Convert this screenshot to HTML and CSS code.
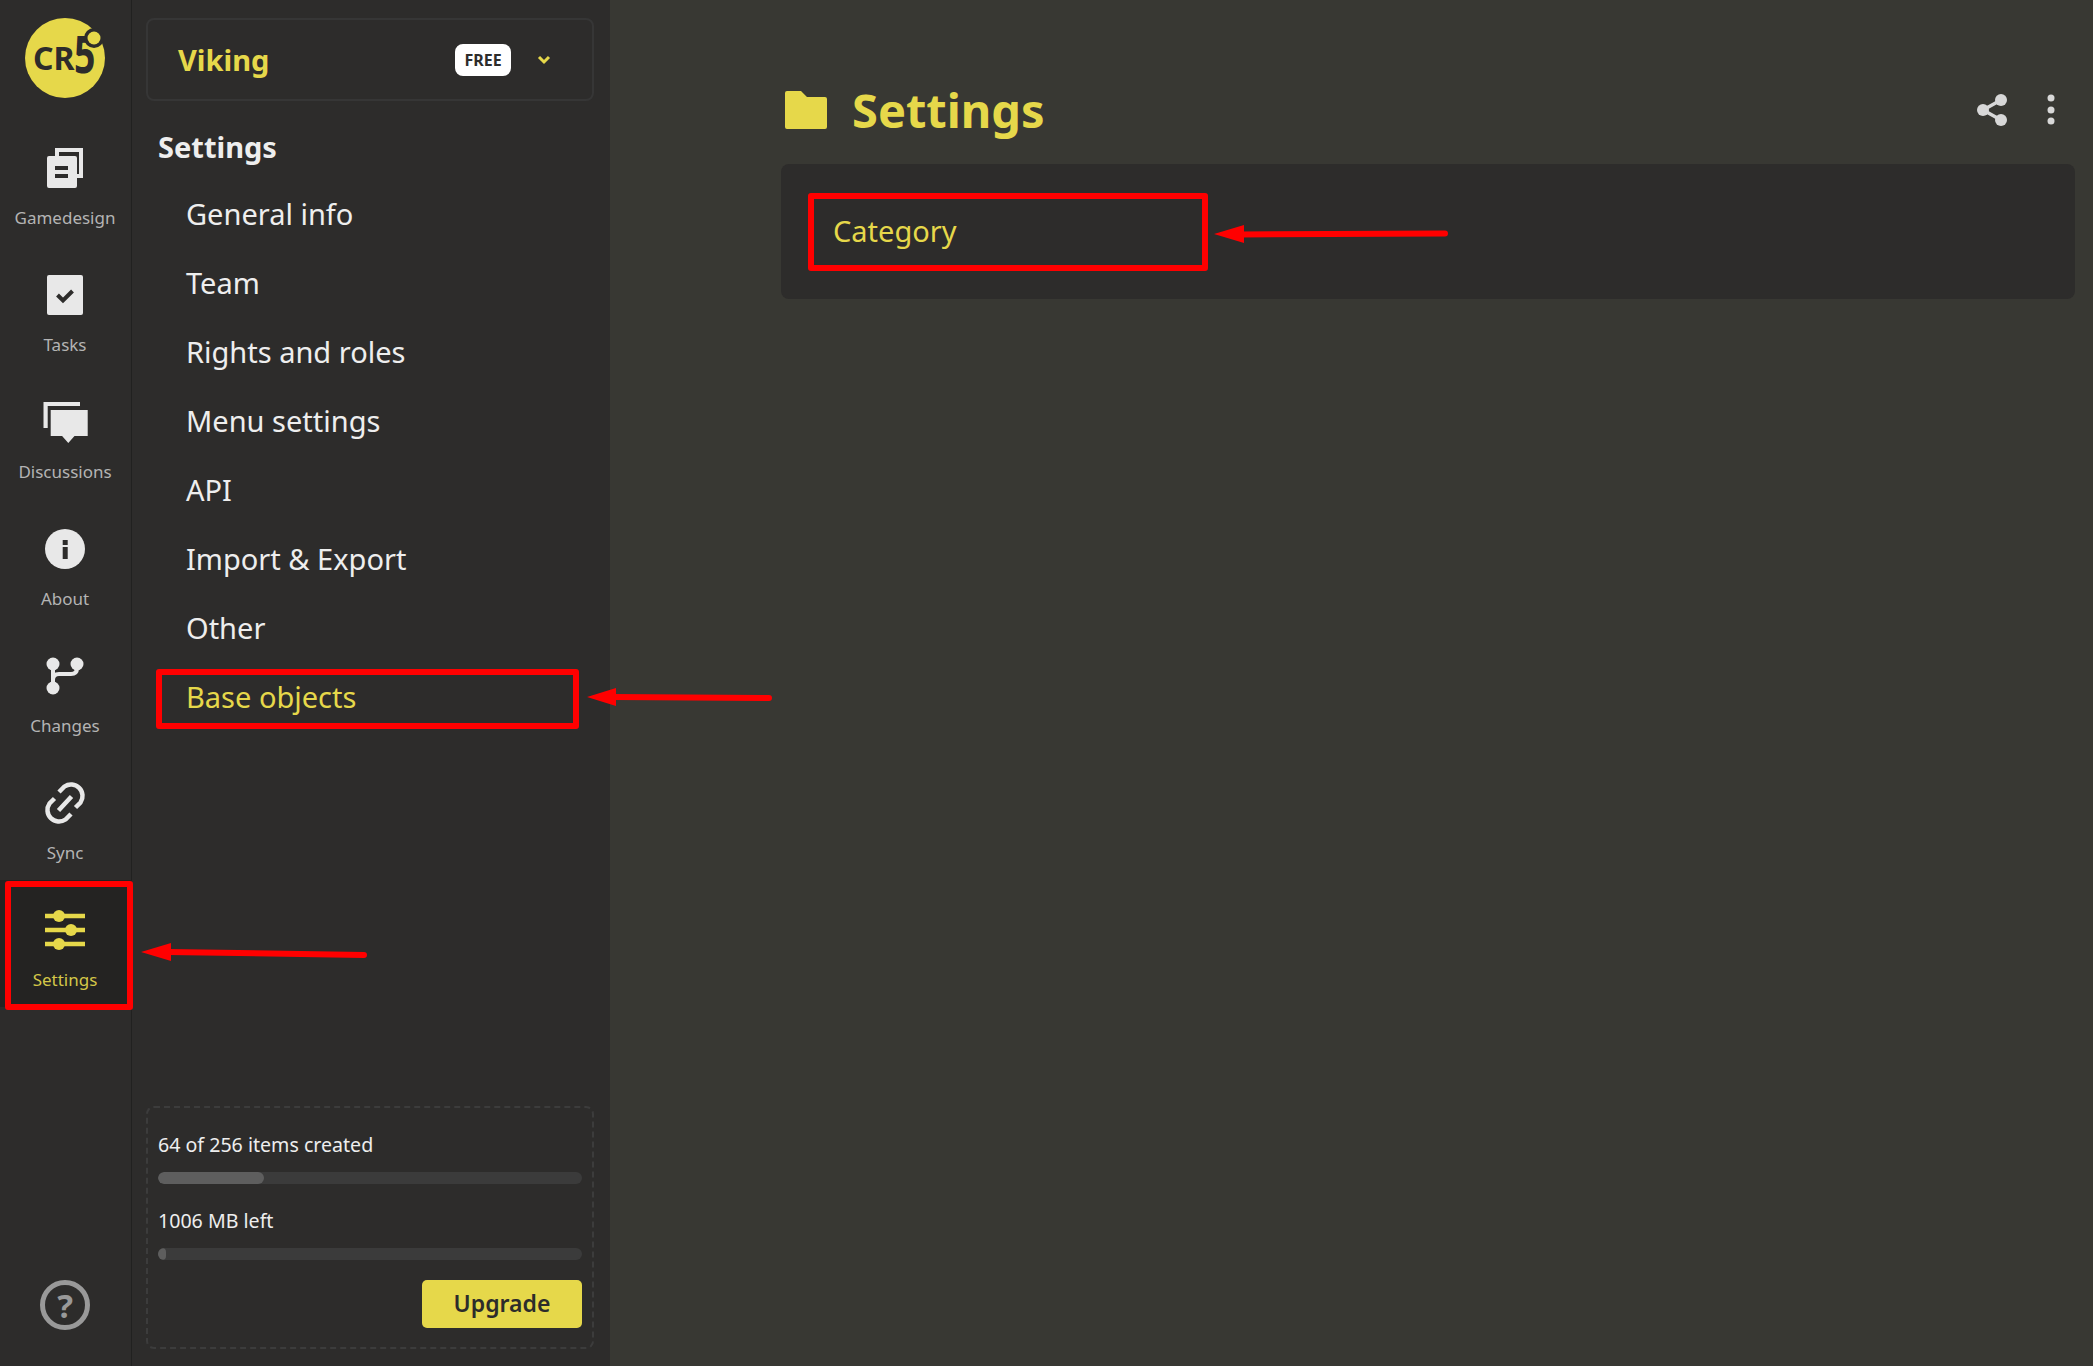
FILE: index.html
```html
<!DOCTYPE html>
<html lang="en">
<head>
<meta charset="utf-8">
<title>Settings</title>
<link rel="stylesheet" href="styles.css">
</head>
<body>
<div class="app">
  <nav class="rail">
    <div class="logo">
      <svg class="logo-svg" viewBox="0 0 80 80" width="80" height="80">
        <circle cx="40" cy="40" r="40" fill="#e6d84a"/>
        <text class="logo-cr" x="8" y="52">CR</text>
        <text class="logo-five" transform="translate(49 55) scale(.72 1)">5</text>
        <circle cx="69" cy="20" r="10" fill="#2d2c2b"/>
        <circle cx="69" cy="20" r="6.5" fill="#e6d84a"/>
      </svg>
    </div>
    <a class="rail-item">
      <svg class="rail-icon" viewBox="0 0 60 60"><path class="ln" d="M22 18v-6h24v26h-4"/><path class="fl" fill-rule="evenodd" d="M14 18h26a2 2 0 012 2v28a2 2 0 01-2 2H14a2 2 0 01-2-2V20a2 2 0 012-2zm6 10v4h13v-4zm0 8v4h13v-4z"/></svg>
      <span class="rail-label">Gamedesign</span>
    </a>
    <a class="rail-item">
      <svg class="rail-icon" viewBox="0 0 60 60"><rect class="fl" x="12" y="10" width="36" height="40" rx="2"/><path class="chk" d="M22.500 30l5.500 5.500 9.500-9.500"/></svg>
      <span class="rail-label">Tasks</span>
    </a>
    <a class="rail-item">
      <svg class="rail-icon" viewBox="0 0 60 60"><path class="fl" d="M8.500 10H45v4H12.700v22H8.500z"/><path class="fl" d="M15.700 18h37v26H39.500l-6.200 7-6.200-7H15.700z"/></svg>
      <span class="rail-label">Discussions</span>
    </a>
    <a class="rail-item">
      <svg class="rail-icon" viewBox="0 0 60 60"><circle class="fl" cx="30" cy="30" r="20"/><rect class="cut" x="27.700" y="21" width="5" height="5"/><rect class="cut" x="27.700" y="28" width="5" height="12"/></svg>
      <span class="rail-label">About</span>
    </a>
    <a class="rail-item">
      <svg class="rail-icon" viewBox="0 0 60 60"><circle class="fl" cx="18" cy="18" r="6.500"/><circle class="fl" cx="42" cy="18" r="6.500"/><circle class="fl" cx="18" cy="42" r="6.500"/><path class="ln" d="M18 18v24M42 18v4q0 6-6 6H24q-6 0-6 6"/></svg>
      <span class="rail-label">Changes</span>
    </a>
    <a class="rail-item">
      <svg class="rail-icon" viewBox="0 0 60 60"><path class="ln thick" d="M24 19l5.500-5.500a11.500 11.500 0 0116 16l-5 5M36 41l-5.500 5.500a11.500 11.500 0 01-16-16l5-5M23.500 37.500L36.500 23.500"/></svg>
      <span class="rail-label">Sync</span>
    </a>
    <a class="rail-item active">
      <svg class="rail-icon" viewBox="0 0 60 60"><path class="ln-y" d="M10 16h40M10 30h40M10 44h40"/><circle class="fl-y" cx="24" cy="16" r="6"/><circle class="fl-y" cx="36" cy="30" r="6"/><circle class="fl-y" cx="24" cy="44" r="6"/></svg>
      <span class="rail-label">Settings</span>
      <span class="mark mark-rail"></span>
    </a>
    <a class="help"><span class="help-mark">?</span></a>
  </nav>

  <aside class="side">
    <div class="project">
      <span class="project-name">Viking</span>
      <span class="badge">FREE</span>
      <svg class="caret" viewBox="0 0 14 10" width="14" height="10"><path d="M2 2l5 5 5-5"/></svg>
    </div>
    <h2 class="side-title">Settings</h2>
    <ul class="menu">
      <li class="menu-item">General info</li>
      <li class="menu-item">Team</li>
      <li class="menu-item">Rights and roles</li>
      <li class="menu-item">Menu settings</li>
      <li class="menu-item">API</li>
      <li class="menu-item">Import &amp; Export</li>
      <li class="menu-item">Other</li>
      <li class="menu-item current">Base objects<span class="mark mark-menu"></span></li>
    </ul>
    <div class="quota">
      <div class="quota-label">64 of 256 items created</div>
      <div class="bar"><div class="bar-fill" style="width:25%"></div></div>
      <div class="quota-label next">1006 MB left</div>
      <div class="bar"><div class="bar-fill" style="width:2%"></div></div>
      <div class="quota-foot"><button class="upgrade">Upgrade</button></div>
    </div>
  </aside>

  <main class="main">
    <header class="head">
      <svg class="folder" viewBox="0 0 42 38" width="42" height="38"><path d="M2 0h14l6 6h18a2 2 0 012 2v28a2 2 0 01-2 2H2a2 2 0 01-2-2V2a2 2 0 012-2z"/></svg>
      <h1 class="title">Settings</h1>
      <div class="actions">
        <svg class="share" viewBox="0 0 32 32" width="32" height="32"><path d="M7 16L25 6M7 16l18 10"/><circle cx="7" cy="16" r="6"/><circle cx="25" cy="6" r="6"/><circle cx="25" cy="26" r="6"/></svg>
        <svg class="dots" viewBox="0 0 8 32" width="8" height="32"><circle cx="4" cy="4" r="3.500"/><circle cx="4" cy="16" r="3.500"/><circle cx="4" cy="27" r="3.500"/></svg>
      </div>
    </header>
    <section class="card">
      <div class="card-row">Category<span class="mark"></span></div>
    </section>
  </main>

  <svg class="arrows" viewBox="0 0 2093 1366" width="2093" height="1366">
    <path class="arrow-line" d="M168 952L364 955"/>
    <path class="arrow-head" d="M141 952l30-9v18z"/>
    <path class="arrow-line" d="M612 697L769 698"/>
    <path class="arrow-head" d="M587 697l29-9v18z"/>
    <path class="arrow-line" d="M1240 234.500L1445 233.500"/>
    <path class="arrow-head" d="M1214 234l30-9v18z"/>
  </svg>
</div>
</body>
</html>
```
FILE: styles.css
```css
* { box-sizing: border-box; }
html, body { margin: 0; height: 100%; }
body {
  background: #383833;
  color: #eee;
  font-family: "Noto Sans", "Open Sans", sans-serif;
  overflow: hidden;
}
.app { position: relative; display: flex; height: 1366px; }

/* rail */
.rail {
  width: 132px;
  flex: none;
  display: flex;
  flex-direction: column;
  background: #2d2c2b;
  border-right: 1px solid #212120;
}
.logo { height: 118px; padding: 18px 0 0 25px; }
.logo-svg { display: block; overflow: visible; }
.logo-cr { font-size: 32px; font-weight: 700; fill: #2d2c2b; }
.logo-five { font-size: 52px; font-weight: 700; fill: #2d2c2b; }
.rail-item {
  position: relative;
  height: 127px;
  padding: 20px 1px 0 0;
  display: flex;
  flex-direction: column;
  align-items: center;
}
.rail-icon { width: 60px; height: 60px; flex: none; }
.rail-label {
  margin-top: 10px;
  font-size: 17px;
  line-height: 20px;
  color: #b4b4b4;
}
.fl { fill: #e8e8e8; }
.cut { fill: #2d2c2b; }
.ln { fill: none; stroke: #e8e8e8; stroke-width: 4; }
.thick { stroke-width: 4.5; }
.chk { fill: none; stroke: #2d2c2b; stroke-width: 4; }
.fl-y { fill: #e6d84a; }
.ln-y { fill: none; stroke: #e6d84a; stroke-width: 4.5; }
.active { background: #242322; }
.active .rail-label { color: #d4c748; }
.help {
  margin: auto 0 36px 40px;
  width: 50px;
  height: 50px;
  border: 5px solid #999;
  border-radius: 50%;
  display: flex;
  align-items: center;
  justify-content: center;
}
.help-mark { font-size: 33px; font-weight: 700; line-height: 1; color: #999; }

/* annotation frames */
.mark {
  position: absolute;
  inset: 0;
  border: 6px solid #f00;
  border-radius: 3px;
  pointer-events: none;
}
.mark-rail { inset: auto; left: 5px; top: 1px; width: 128px; height: 129px; }
.mark-menu { inset: 6px 15px 3px 10px; }
.arrows { position: absolute; left: 0; top: 0; pointer-events: none; }
.arrow-line { fill: none; stroke: #f00; stroke-width: 6; stroke-linecap: round; }
.arrow-head { fill: #f00; }

/* sidebar */
.side {
  width: 478px;
  flex: none;
  display: flex;
  flex-direction: column;
  padding: 18px 16px 17px 14px;
  background: #2d2c2b;
}
.project {
  height: 83px;
  display: flex;
  align-items: center;
  padding: 0 41px 0 30px;
  border: 2px solid #363636;
  border-radius: 8px;
}
.project-name { font-size: 29px; font-weight: 700; color: #e6d84a; margin-right: auto; }
.badge {
  width: 56px;
  height: 32px;
  display: flex;
  align-items: center;
  justify-content: center;
  background: #fff;
  color: #2d2c2b;
  border-radius: 8px;
  font-size: 16px;
  font-weight: 700;
}
.caret { margin-left: 26px; fill: none; stroke: #e6d84a; stroke-width: 3; }
.side-title {
  margin: 28px 0 0 12px;
  font-size: 29px;
  line-height: 36px;
  font-weight: 700;
  color: #eee;
}
.menu { list-style: none; margin: 15px 0 0; padding: 0; }
.menu-item {
  position: relative;
  height: 69px;
  line-height: 68px;
  padding-left: 40px;
  font-size: 29px;
  color: #eee;
}
.current { color: #e6d84a; }
.quota {
  margin-top: auto;
  height: 243px;
  padding: 23px 10px 19px;
  border: 2px dashed #3c3c3c;
  border-radius: 8px;
}
.quota-label { font-size: 19.6px; line-height: 28px; color: #eee; }
.next { margin-top: 23px; }
.bar { margin-top: 13px; height: 12px; background: #3b3b3b; border-radius: 6px; overflow: hidden; }
.bar-fill { height: 100%; background: #5e5e5e; border-radius: 6px; }
.quota-foot { margin-top: 20px; display: flex; justify-content: flex-end; }
.upgrade {
  width: 160px;
  height: 48px;
  padding: 0 0 3px;
  border: 0;
  border-radius: 5px;
  background: #e6d84a;
  color: #2d2c2b;
  font-family: inherit;
  font-size: 23px;
  font-weight: 600;
}

/* main */
.main { flex: 1; min-width: 0; padding: 80px 18px 0 171px; }
.head { height: 60px; display: flex; align-items: center; padding: 0 20px 0 4px; margin-bottom: 24px; }
.folder { fill: #e6d84a; flex: none; }
.title { margin: 0 0 0 25px; font-size: 47px; line-height: 60px; font-weight: 700; color: #e6d84a; }
.actions { margin-left: auto; display: flex; align-items: center; gap: 39px; }
.share { fill: #d8d8d8; stroke: #d8d8d8; stroke-width: 0; }
.share path { fill: none; stroke-width: 3.5; }
.dots { fill: #d8d8d8; }
.card { height: 135px; padding: 29px 27px; background: #2d2c2b; border-radius: 8px; }
.card-row {
  position: relative;
  width: 400px;
  height: 78px;
  line-height: 76px;
  padding-left: 25px;
  font-size: 29px;
  color: #e6d84a;
}
```
